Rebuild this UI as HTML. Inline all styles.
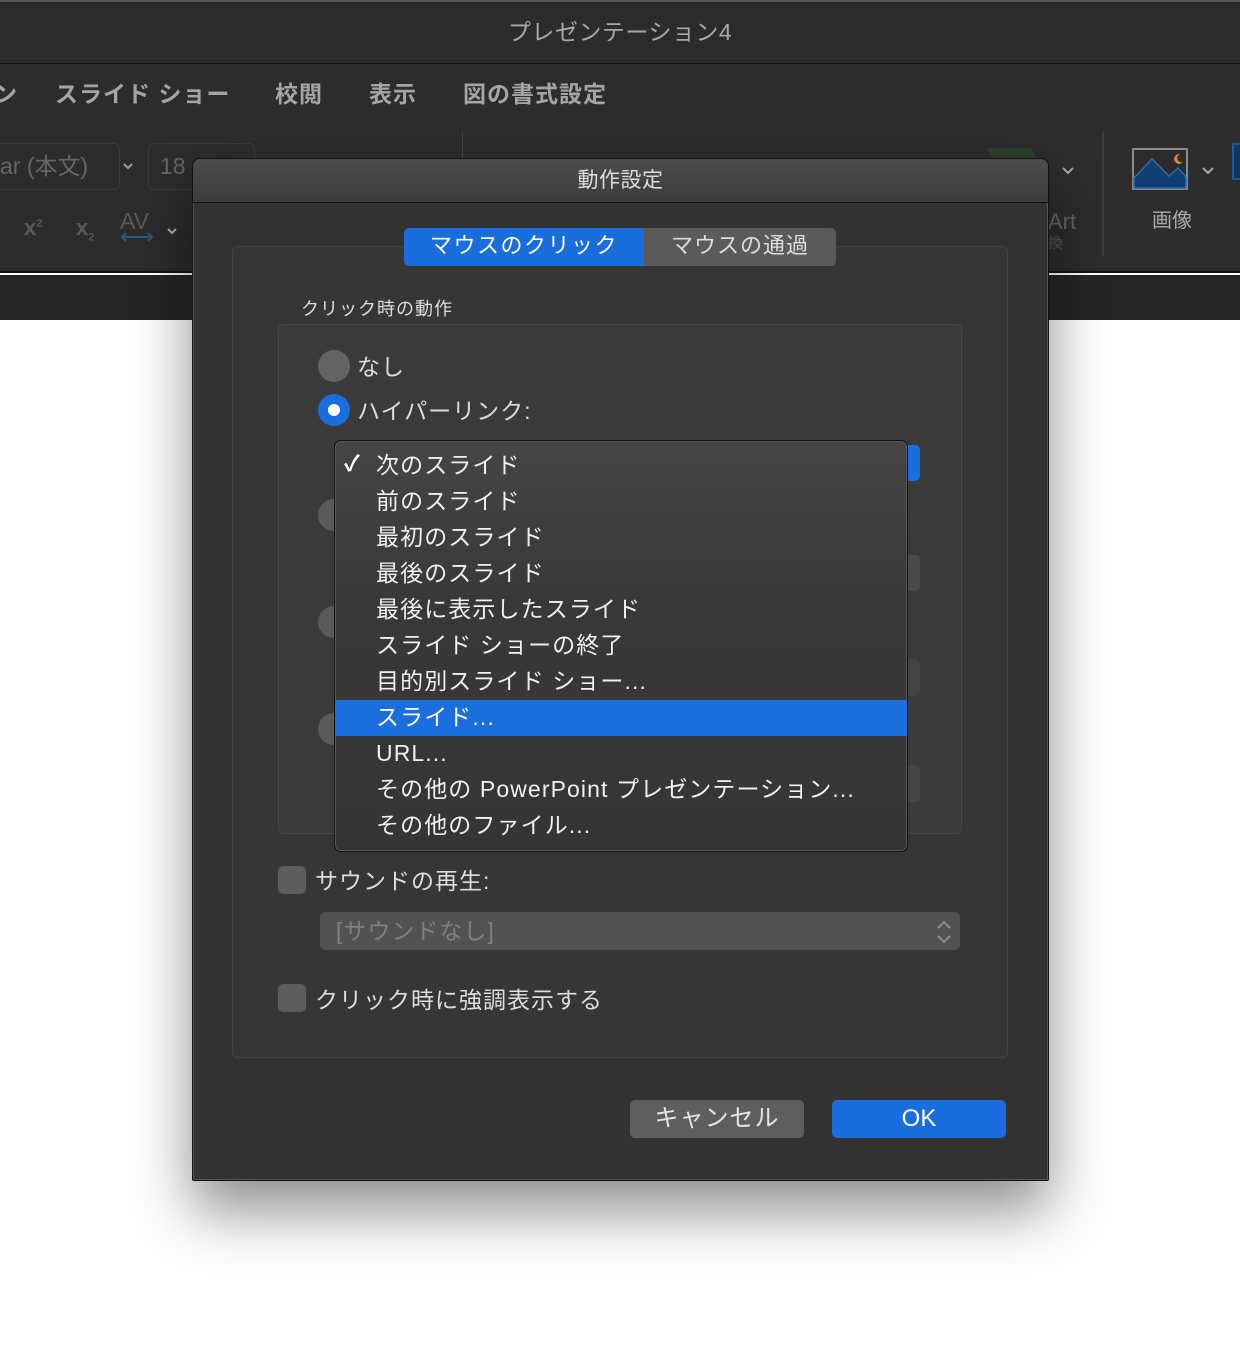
<!DOCTYPE html>
<html><head><meta charset="utf-8"><style>
*{margin:0;padding:0;box-sizing:border-box}
body{width:1240px;height:1350px;background:#fff;position:relative;overflow:hidden;font-family:"Liberation Sans","Noto Sans CJK JP",sans-serif}
.a{position:absolute}
.t{white-space:nowrap;line-height:1}
.ls{letter-spacing:1px}
</style></head><body>
<!-- app chrome -->
<div class="a" style="left:0;top:0;width:1240px;height:64px;background:#2b2b2b;border-top:2px solid #555;border-bottom:1px solid #111"></div>
<div class="a t" style="left:0;width:1240px;top:21px;text-align:center;color:#a8a8a8;font-size:23px;letter-spacing:.5px">プレゼンテーション4</div>
<div class="a" style="left:0;top:64px;width:1240px;height:209px;background:#2c2c2c;border-bottom:2px solid #111"></div>
<div class="a t" style="left:-6px;top:83px;color:#a5a5a5;font-size:23px;font-weight:bold">ン</div>
<div class="a t" style="left:55px;top:83px;color:#a5a5a5;font-size:23px;font-weight:bold;letter-spacing:1px">スライド ショー</div>
<div class="a t" style="left:275px;top:83px;color:#a5a5a5;font-size:23px;font-weight:bold;letter-spacing:1px">校閲</div>
<div class="a t" style="left:369px;top:83px;color:#a5a5a5;font-size:23px;font-weight:bold;letter-spacing:1px">表示</div>
<div class="a t" style="left:463px;top:83px;color:#a5a5a5;font-size:23px;font-weight:bold;letter-spacing:1px">図の書式設定</div>
<div class="a" style="left:-10px;top:143px;width:130px;height:47px;border:1px solid #3a3a3a;border-radius:6px"></div>
<div class="a t" style="left:0;top:155px;color:#666;font-size:23px">ar (本文)</div>
<svg class="a" style="left:122px;top:162px" width="12" height="8" viewBox="0 0 12 8"><path d="M2 2 L6 6 L10 2" fill="none" stroke="#999" stroke-width="2"/></svg>
<div class="a" style="left:148px;top:143px;width:107px;height:47px;border:1px solid #3a3a3a;border-radius:6px"></div>
<div class="a t" style="left:160px;top:155px;color:#666;font-size:23px">18</div>
<div class="a t" style="left:24px;top:217px;color:#5a5a5a;font-size:22px;font-weight:bold">x<sup style="font-size:11px">2</sup></div>
<div class="a t" style="left:76px;top:217px;color:#5a5a5a;font-size:22px;font-weight:bold">x<sub style="font-size:11px;color:#3b5a75">2</sub></div>
<div class="a t" style="left:120px;top:210px;color:#5a5a5a;font-size:23px">AV</div>
<svg class="a" style="left:120px;top:232px" width="34" height="10" viewBox="0 0 34 10"><path d="M2 5 H32 M6 1 L2 5 L6 9 M28 1 L32 5 L28 9" fill="none" stroke="#2d5780" stroke-width="2"/></svg>
<svg class="a" style="left:166px;top:227px" width="12" height="8" viewBox="0 0 12 8"><path d="M2 2 L6 6 L10 2" fill="none" stroke="#aaa" stroke-width="2"/></svg>
<div class="a" style="left:462px;top:132px;width:1px;height:40px;background:#444"></div>
<div class="a" style="left:1102px;top:132px;width:2px;height:124px;background:#3e3e3e"></div>
<div class="a" style="left:990px;top:148px;width:44px;height:12px;background:#2f3f2f;transform:skewX(30deg)"></div>
<svg class="a" style="left:1061px;top:166px" width="14" height="10" viewBox="0 0 14 10"><path d="M2 2 L7 7 L12 2" fill="none" stroke="#aaa" stroke-width="2"/></svg>
<div class="a t" style="left:1048px;top:211px;color:#666;font-size:22px">Art</div>
<div class="a t" style="left:1048px;top:236px;color:#555;font-size:15px">換</div>
<svg class="a" style="left:1132px;top:148px" width="56" height="42" viewBox="0 0 56 42"><rect x="1" y="1" width="54" height="40" fill="#2b2b2b" stroke="#8a8a8a" stroke-width="2"/><path d="M2 40 L2 30 L20 11 L37 28 L46 20 L54 29 L54 40Z" fill="#0e3f70" stroke="#2c6aa8" stroke-width="1.5"/><path d="M48 6 a5 5 0 1 0 3 8 a4 4 0 0 1 -3 -8z" fill="#d28a3a"/></svg>
<svg class="a" style="left:1201px;top:166px" width="14" height="10" viewBox="0 0 14 10"><path d="M2 2 L7 7 L12 2" fill="none" stroke="#aaa" stroke-width="2"/></svg>
<div class="a t" style="left:1152px;top:211px;color:#aaa;font-size:20px">画像</div>
<div class="a" style="left:1232px;top:143px;width:12px;height:37px;border:2px solid #1c5a9a;background:#10365e"></div>
<div class="a" style="left:0;top:275px;width:1240px;height:45px;background:#262626"></div>

<!-- dialog -->
<div class="a" style="left:192px;top:158px;width:857px;height:1023px;background:#323232;border:1px solid #111;border-radius:8px 8px 2px 2px;box-shadow:0 30px 60px rgba(0,0,0,.45),0 0 0 1px #555 inset;overflow:hidden">
  <div class="a" style="left:0;top:0;width:857px;height:44px;background:linear-gradient(#4b4b4b,#3d3d3d);border-bottom:1px solid #111"></div>
</div>
<div class="a t" style="left:192px;width:857px;top:170px;text-align:center;color:#ddd;font-size:21px;letter-spacing:.5px">動作設定</div>

<div class="a" style="left:232px;top:246px;width:776px;height:812px;background:#363636;border:1px solid #444;border-radius:6px"></div>
<div class="a" style="left:404px;top:228px;width:240px;height:38px;background:#1a6ddc;border-radius:5px 0 0 5px"></div>
<div class="a" style="left:644px;top:228px;width:192px;height:38px;background:#5b5b5b;border-radius:0 5px 5px 0"></div>
<div class="a t" style="left:404px;width:240px;top:235px;text-align:center;color:#fff;font-size:22px;letter-spacing:1.5px">マウスのクリック</div>
<div class="a t" style="left:644px;width:192px;top:235px;text-align:center;color:#ddd;font-size:22px;letter-spacing:1px">マウスの通過</div>

<div class="a t" style="left:301px;top:300px;color:#ddd;font-size:18px;letter-spacing:1px">クリック時の動作</div>
<div class="a" style="left:278px;top:324px;width:684px;height:510px;background:#3a3a3a;border:1px solid #464646;border-radius:5px"></div>

<div class="a" style="left:318px;top:350px;width:32px;height:32px;border-radius:50%;background:#646464"></div>
<div class="a t ls" style="left:357px;top:356px;color:#ddd;font-size:23px">なし</div>
<div class="a" style="left:318px;top:394px;width:32px;height:32px;border-radius:50%;background:#1a6ddc"></div>
<div class="a" style="left:328px;top:404px;width:12px;height:12px;border-radius:50%;background:#fff"></div>
<div class="a t ls" style="left:357px;top:400px;color:#ddd;font-size:23px">ハイパーリンク:</div>
<div class="a" style="left:318px;top:499px;width:32px;height:32px;border-radius:50%;background:#5a5a5a"></div>
<div class="a" style="left:318px;top:606px;width:32px;height:32px;border-radius:50%;background:#5a5a5a"></div>
<div class="a" style="left:318px;top:713px;width:32px;height:32px;border-radius:50%;background:#5a5a5a"></div>
<div class="a" style="left:880px;top:445px;width:40px;height:36px;background:#1a6ddc;border-radius:5px"></div>
<div class="a" style="left:880px;top:555px;width:40px;height:36px;background:#4a4a4a;border-radius:5px"></div>
<div class="a" style="left:880px;top:659px;width:40px;height:37px;background:#444;border-radius:5px"></div>
<div class="a" style="left:880px;top:765px;width:40px;height:37px;background:#444;border-radius:5px"></div>

<!-- menu -->
<div class="a" style="left:334px;top:440px;width:574px;height:412px;background:linear-gradient(#454545,#383838 40%,#353535);border:1px solid #111;box-shadow:0 0 0 1px #5a5a5a inset;border-radius:7px;overflow:hidden">
  <div class="a" style="left:0;top:259px;width:574px;height:36px;background:#1a6fdc"></div>
</div>
<div class="a t" style="left:344px;top:453px;color:#fff;font-size:22px;font-weight:bold">✓</div>
<div class="a" style="left:376px;top:453px;color:#f0f0f0;font-size:23px;letter-spacing:1.1px">
<div class="t" style="line-height:36px;margin-top:-6px">次のスライド</div>
<div class="t" style="line-height:36px">前のスライド</div>
<div class="t" style="line-height:36px">最初のスライド</div>
<div class="t" style="line-height:36px">最後のスライド</div>
<div class="t" style="line-height:36px">最後に表示したスライド</div>
<div class="t" style="line-height:36px">スライド ショーの終了</div>
<div class="t" style="line-height:36px">目的別スライド ショー...</div>
<div class="t" style="line-height:36px;color:#fff">スライド...</div>
<div class="t" style="line-height:36px">URL...</div>
<div class="t" style="line-height:36px">その他の PowerPoint プレゼンテーション...</div>
<div class="t" style="line-height:36px">その他のファイル...</div>
</div>

<div class="a" style="left:278px;top:866px;width:28px;height:28px;border-radius:5px;background:#5d5d5d"></div>
<div class="a t ls" style="left:315px;top:870px;color:#ddd;font-size:23px">サウンドの再生:</div>
<div class="a" style="left:320px;top:912px;width:640px;height:38px;border-radius:5px;background:#525252"></div>
<div class="a t ls" style="left:336px;top:920px;color:#808080;font-size:23px">[サウンドなし]</div>
<svg class="a" style="left:935px;top:919px" width="18" height="26" viewBox="0 0 18 26"><path d="M3 9 L9 3 L15 9 M3 17 L9 23 L15 17" fill="none" stroke="#888" stroke-width="2"/></svg>
<div class="a" style="left:278px;top:984px;width:28px;height:28px;border-radius:5px;background:#5d5d5d"></div>
<div class="a t ls" style="left:315px;top:989px;color:#ddd;font-size:23px">クリック時に強調表示する</div>

<div class="a" style="left:630px;top:1100px;width:174px;height:38px;border-radius:5px;background:#5e5e5e"></div>
<div class="a t" style="left:630px;width:174px;top:1107px;text-align:center;color:#e6e6e6;font-size:24px;letter-spacing:1px">キャンセル</div>
<div class="a" style="left:832px;top:1100px;width:174px;height:38px;border-radius:5px;background:#1a6ddc"></div>
<div class="a t" style="left:832px;width:174px;top:1107px;text-align:center;color:#fff;font-size:24px">OK</div>
</body></html>
